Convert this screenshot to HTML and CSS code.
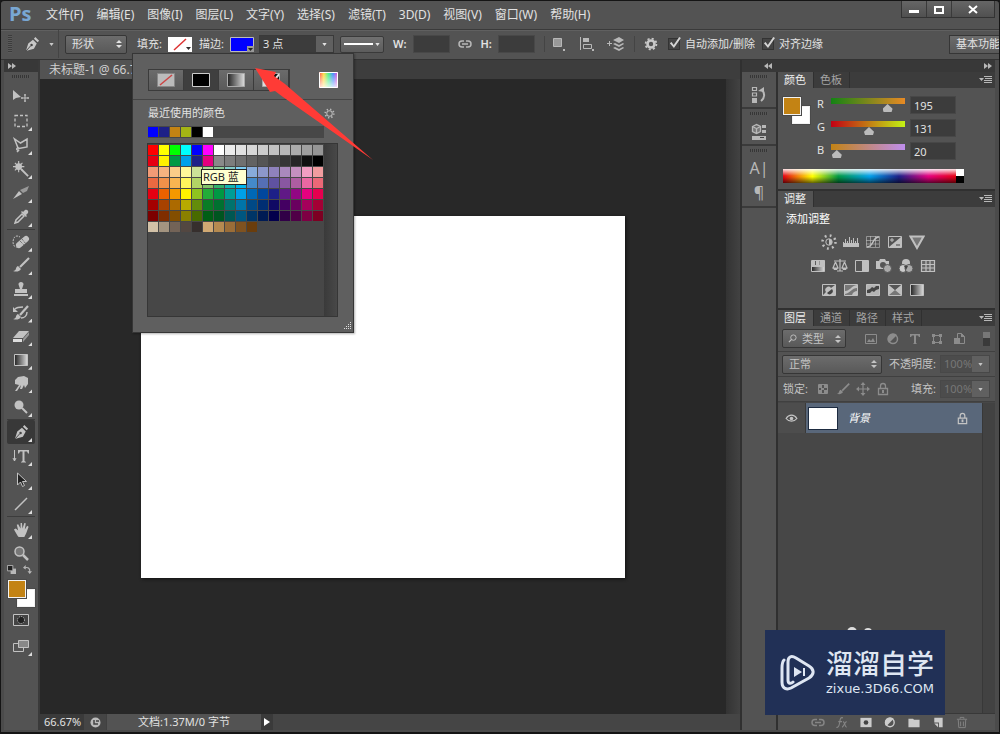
FILE: index.html
```html
<!DOCTYPE html>
<html lang="zh-CN">
<head>
<meta charset="utf-8">
<title>Ps</title>
<link rel="stylesheet" href="styles.css">
</head>
<body>
<svg class="sprite" aria-hidden="true">
  <defs>
    <linearGradient id="gr"><stop offset="0" stop-color="#222"/><stop offset="1" stop-color="#ddd"/></linearGradient>
    <linearGradient id="rainbow"><stop offset="0" stop-color="#f44"/><stop offset=".25" stop-color="#fd4"/><stop offset=".5" stop-color="#4e8"/><stop offset=".75" stop-color="#48f"/><stop offset="1" stop-color="#f4c"/></linearGradient>
    <linearGradient id="fade" x2="0" y2="1"><stop offset="0" stop-color="#fff" stop-opacity="0"/><stop offset="1" stop-color="#fff" stop-opacity=".8"/></linearGradient>
  </defs>
  <symbol id="i-pen" viewBox="0 0 18 18"><path fill="currentColor" d="M2 16l2.500-8 5-4 4 4-3 5.500zM10.500 3l1.500-2 4 4-1.500 1.500z"/><path d="M2 16l5-5.500" stroke="#444"/><circle cx="8" cy="9.500" r="1.300" fill="#444"/></symbol>
  <symbol id="i-updown" viewBox="0 0 6 10"><path fill="currentColor" d="M0 4l3-3 3 3zM0 6h6L3 9z"/></symbol>
  <symbol id="i-down" viewBox="0 0 6 4"><path fill="currentColor" d="M0 0h6L3 4z"/></symbol>
  <symbol id="i-link" viewBox="0 0 14 8"><path fill="none" stroke="currentColor" stroke-width="1.500" d="M6 1H4a3 3 0 0 0 0 6h2M8 1h2a3 3 0 0 1 0 6H8M4 4h6"/></symbol>
  <symbol id="i-combine" viewBox="0 0 16 16"><path fill="#999" stroke="currentColor" d="M2.500 2.500h8v8h-8z"/><path fill="currentColor" d="M12 13h2v2h-2z"/></symbol>
  <symbol id="i-align" viewBox="0 0 16 16"><path fill="none" stroke="currentColor" d="M1.500 1v13M4.500 8.500h8v4h-8z"/><path fill="currentColor" d="M4 2h6v4H4zM13 13h2v2h-2z"/></symbol>
  <symbol id="i-arrange" viewBox="0 0 18 16"><path fill="currentColor" d="M6 4l6-3 5 3-5 3zM6 8l2-1 4 2 4-2 1 1-5 3zM6 12l2-1 4 2 4-2 1 1-5 3zM0 7h2V5h1v2h2v1H3v2H2V8H0z"/></symbol>
  <symbol id="i-gear" viewBox="0 0 16 16"><circle cx="8" cy="8" r="4" fill="none" stroke="currentColor" stroke-width="3"/><circle cx="8" cy="8" r="6.200" fill="none" stroke="currentColor" stroke-width="2" stroke-dasharray="2.400 2.470"/></symbol>
  <symbol id="i-gear-thin" viewBox="0 0 16 16"><circle cx="8" cy="8" r="4" fill="none" stroke="currentColor" stroke-width="1.500"/><circle cx="8" cy="8" r="6.200" fill="none" stroke="currentColor" stroke-width="2.400" stroke-dasharray="2 2.870"/></symbol>
  <symbol id="i-move" viewBox="0 0 18 16"><path fill="currentColor" d="M1 1v10l3-2 5-1z"/><path fill="none" stroke="currentColor" d="M13 5v8M9 9h8M12 6h2M12 12h2M10 8v2M16 8v2"/></symbol>
  <symbol id="i-marquee" viewBox="0 0 16 16"><path fill="none" stroke="currentColor" stroke-width="1.300" stroke-dasharray="3 2" d="M2 2.500h12v11H2z"/></symbol>
  <symbol id="i-lasso" viewBox="0 0 16 16"><path fill="none" stroke="currentColor" stroke-width="1.500" d="M5 11L1.500 2l6 4L14 2v8l-8 1.500zM6 11c-3-1-3 3 0 2l-2 2"/></symbol>
  <symbol id="i-wand" viewBox="0 0 18 18"><circle cx="6" cy="6" r="3.500" fill="currentColor"/><path stroke="currentColor" stroke-width="1.200" d="M6 0v12M0 6h12M2 2l8 8M10 2l-8 8"/><path stroke="currentColor" stroke-width="2" d="M9 9l7 7"/></symbol>
  <symbol id="i-slice" viewBox="0 0 18 16"><path fill="currentColor" d="M1 14l6-8 3 3z"/><path fill="#999" d="M8 5l9-4-2 5-4 2z"/></symbol>
  <symbol id="i-dropper" viewBox="0 0 16 16"><path fill="none" stroke="currentColor" stroke-width="1.500" d="M2 14l1-3 6-6 2 2-6 6z"/><path fill="currentColor" d="M8 3l1-1 1 1 2-2c2-1 4 1 3 3l-2 2 1 1-1 1z"/></symbol>
  <symbol id="i-heal" viewBox="0 0 18 16"><path fill="none" stroke="currentColor" stroke-dasharray="2 1" d="M6 13c-5 1-6-5-4-9 2-3 4-2 6-1"/><path stroke="currentColor" stroke-width="6" stroke-linecap="round" d="M7 11l7-6"/><path stroke="#555" stroke-dasharray="1 1" d="M8 7l5 5M10 5l4 5"/></symbol>
  <symbol id="i-brush" viewBox="0 0 18 16"><path fill="currentColor" d="M1 14c4 0 2-4 5-5l3 3c-2 3-5 3-8 2z"/><path stroke="currentColor" stroke-width="2.200" d="M8 10l9-9"/></symbol>
  <symbol id="i-stamp" viewBox="0 0 16 16"><path fill="currentColor" d="M7 8L5.500 3.500C5 0 11 0 10.500 3.500L9 8h5v4H2V8zM1 13h14v2H1z"/></symbol>
  <symbol id="i-history" viewBox="0 0 18 16"><path fill="none" stroke="currentColor" stroke-width="1.500" d="M3 4c2-2 5-2 8-2M15 7c0 4-3 6-6 6"/><path fill="currentColor" d="M1 2v5h5zM1 14c4 0 2-4 5-5l3 3c-2 3-5 3-8 2z"/><path stroke="currentColor" stroke-width="2.200" d="M8 10l8-9"/></symbol>
  <symbol id="i-eraser" viewBox="0 0 18 16"><path fill="currentColor" d="M1 10l6-7h10l-6 7z"/><path fill="#ddd" d="M1 11h9v3H1z"/><path fill="#999" d="M11 11l6-7v3l-6 7z"/></symbol>
  <symbol id="i-grad" viewBox="0 0 16 16"><path fill="url(#gr)" stroke="currentColor" d="M1.500 2.500h13v11h-13z"/></symbol>
  <symbol id="i-smudge" viewBox="0 0 16 16"><path fill="currentColor" d="M2 15l4-6-4-1V4l3-3 6-1 4 2v6l-3 4-1-3-2 4-2 0 1-4-4 6z"/></symbol>
  <symbol id="i-dodge" viewBox="0 0 16 16"><circle cx="6" cy="6" r="4.500" fill="currentColor"/><path stroke="currentColor" stroke-width="2" d="M9 9l5 5"/></symbol>
  <symbol id="i-type" viewBox="0 0 18 16"><path fill="none" stroke="currentColor" d="M2.500 2v11M1 10l1.500 3L4 10"/><path fill="currentColor" d="M6 2h11v3.500h-1L15 3.500h-2.500V13l1.500 1v.5H9V14l1.500-1V3.500H8L7 5.500H6z"/></symbol>
  <symbol id="i-select" viewBox="0 0 16 16"><path fill="#222" stroke="currentColor" d="M4.500 1v12l3-3 2 4.500 2-1-2-4h4z"/></symbol>
  <symbol id="i-line" viewBox="0 0 16 16"><path stroke="currentColor" stroke-width="1.500" d="M2 14L14 2"/></symbol>
  <symbol id="i-hand" viewBox="0 0 18 18"><path fill="currentColor" d="M5 16L1 9l2-1 2.500 2L4 4l1.500-.5L8 8V2h1.500l.5 6 2-6 1.500.5L12.500 9 15 5l1.500 1-2.500 7-2 4H6z"/></symbol>
  <symbol id="i-zoom" viewBox="0 0 16 16"><circle cx="6.500" cy="6.500" r="4.500" fill="#777" stroke="currentColor" stroke-width="1.500"/><path stroke="currentColor" stroke-width="2.500" d="M10 10l5 5"/></symbol>
  <symbol id="i-default" viewBox="0 0 10 10"><path fill="currentColor" d="M4 4h6v6H4z"/><path fill="#222" stroke="currentColor" d="M.5.5h6v6h-6z"/></symbol>
  <symbol id="i-swap" viewBox="0 0 10 10"><path fill="none" stroke="currentColor" stroke-width="1.300" d="M2 3c4-1 6 1 5.500 5"/><path fill="currentColor" d="M3 0v5L0 3zM5 7h5l-2.500 3z"/></symbol>
  <symbol id="i-mask" viewBox="0 0 16 14"><path fill="#444" stroke="currentColor" d="M.5 1.500h15v11H.5z"/><circle cx="8" cy="7" r="3.500" fill="#222" stroke="currentColor" stroke-dasharray="1 1"/></symbol>
  <symbol id="i-screen" viewBox="0 0 16 14"><path fill="#555" stroke="currentColor" d="M.5 4.500h10v8H.5z"/><path fill="#888" stroke="currentColor" d="M5.500 1.500h10v7h-10z"/></symbol>
  <symbol id="i-hist" viewBox="0 0 16 18"><path fill="none" stroke="currentColor" stroke-width="1.200" d="M1.500 1.500h4v3h-4zM1.500 7h4v3h-4z"/><path fill="currentColor" d="M1 12h5v5H1z"/><path fill="none" stroke="currentColor" stroke-width="2" d="M10 15c4-3 4-8 1-11"/><path fill="currentColor" d="M7 5l6-4v5z"/></symbol>
  <symbol id="i-props" viewBox="0 0 16 18"><path fill="#777" stroke="currentColor" stroke-width="1.300" d="M1.500 3.500l4-2 4 2v5l-4 2-4-2zM1.500 3.500l4 2 4-2M5.500 5.500v5"/><path fill="currentColor" d="M11 2h4v3h-4zM11 7h4v3h-4zM1 13h14v4H1z"/><path fill="#444" d="M9 14h4v1H9z"/></symbol>
  <symbol id="i-menu" viewBox="0 0 13 8"><path fill="currentColor" d="M0 2h5L2.500 5zM5 0h8v1H5zM6 2h7v1H6zM5 4h8v1H5zM5 6h8v1H5z"/></symbol>
  <symbol id="i-sun" viewBox="0 0 16 16"><circle cx="8" cy="8" r="3.200" fill="none" stroke="currentColor"/><path fill="currentColor" d="M8 5a3 3 0 0 1 0 6z"/><circle cx="8" cy="8" r="6.500" fill="none" stroke="currentColor" stroke-width="2.500" stroke-dasharray="1.800 3.300"/></symbol>
  <symbol id="i-levels" viewBox="0 0 16 16"><path stroke="currentColor" d="M0 12.500h16M.5 12V8M2.500 12V5M4.500 12V7M6.500 12V3M8.500 12V6M10.500 12V4M12.500 12V7M14.500 12V4"/><path fill="currentColor" d="M0 9h16v4H0z"/></symbol>
  <symbol id="i-curves" viewBox="0 0 16 16"><path fill="none" stroke="currentColor" stroke-opacity=".6" d="M1.500 2.500h13v11h-13zM5.500 2v11M10.500 2v11M1 6.500h13M1 10h13"/><path fill="none" stroke="currentColor" stroke-width="1.500" d="M2 13c7 0 5-10 12-10"/></symbol>
  <symbol id="i-expo" viewBox="0 0 16 16"><path fill="none" stroke="currentColor" d="M1.500 2.500h13v11h-13z"/><path fill="currentColor" d="M14 3v10H2z"/><path stroke="currentColor" d="M3 6h4M5 4v4"/><path stroke="#444" d="M9 11h4"/></symbol>
  <symbol id="i-vib" viewBox="0 0 16 16"><path fill="#777" stroke="currentColor" stroke-width="2" d="M1.500 2.500h13L8 14z"/></symbol>
  <symbol id="i-hue" viewBox="0 0 16 16"><path fill="url(#gr)" stroke="currentColor" d="M1.500 2.500h13v11h-13z"/><path fill="currentColor" d="M2 3h3v4H2zM6 3h3v4H6zM10 3h4v4h-4zM2 7h12v2H2z"/></symbol>
  <symbol id="i-balance" viewBox="0 0 16 16"><path fill="none" stroke="currentColor" stroke-width="1.200" d="M2 3h12M8 1v12M5 13h6M3.500 4L1 10h5L3.500 4M12.500 4L10 10h5l-2.500-6"/><path fill="currentColor" d="M1 10h5l-1 2H2zM10 10h5l-1 2h-3z"/></symbol>
  <symbol id="i-bw" viewBox="0 0 16 16"><path fill="#555" stroke="currentColor" d="M1.500 2.500h13v11h-13z"/><path fill="currentColor" d="M8 3h6v10H8z"/></symbol>
  <symbol id="i-photo" viewBox="0 0 16 16"><path fill="currentColor" d="M0 3h3l1-2h5l1 2h3v8H0z"/><circle cx="7" cy="7" r="3" fill="#555"/><circle cx="11.500" cy="10.500" r="4" fill="#aaa" stroke="#555"/></symbol>
  <symbol id="i-mixer" viewBox="0 0 16 16"><circle cx="8" cy="5" r="4" fill="currentColor"/><circle cx="5" cy="10.500" r="4" fill="#ccc" stroke="#555"/><circle cx="11" cy="10.500" r="4" fill="#aaa" stroke="#555"/><path fill="#444" d="M6 8h4l-2 4z"/></symbol>
  <symbol id="i-lookup" viewBox="0 0 16 16"><path fill="#666" stroke="currentColor" stroke-width="1.200" d="M1.500 2.500h13v11h-13zM6 2v11M10 2v11M1 6.500h13M1 10h13"/></symbol>
  <symbol id="i-invert" viewBox="0 0 16 16"><path fill="#555" stroke="currentColor" d="M1.500 2.500h13v11h-13z"/><path fill="currentColor" d="M14 3v10H2l3-3a3 3 0 0 1 5-4z"/><path fill="#444" d="M6 11a3 3 0 0 0 5-4z"/></symbol>
  <symbol id="i-poster" viewBox="0 0 16 16"><path fill="#777" stroke="currentColor" d="M1.500 2.500h13v11h-13z"/><path fill="currentColor" d="M2 9c5 0 6-5 12-6v3c-5 0-7 5-12 6zM9 13c1-3 3-4 5-4v4z"/></symbol>
  <symbol id="i-thresh" viewBox="0 0 16 16"><path fill="#b4b4b4" stroke="currentColor" d="M1.500 2.500h13v11h-13z"/><path fill="#444" d="M2 8l3-1 2-2 2 1 2-2h3v3l-3 1-2 2-2-1-2 2H2z"/></symbol>
  <symbol id="i-selcol" viewBox="0 0 16 16"><path fill="#777" stroke="currentColor" d="M1.500 2.500h13v11h-13z"/><path fill="currentColor" d="M2 3l6 5-6 5zM14 3L8 8l6 5z"/><path fill="#555" d="M2 3h12L8 8z"/></symbol>
  <symbol id="i-image" viewBox="0 0 14 14"><path fill="none" stroke="currentColor" d="M1.500 2.500h11v9h-11z"/><path fill="currentColor" d="M3 10l2-3 2 2 2-3 2 4z"/></symbol>
  <symbol id="i-adjust" viewBox="0 0 14 14"><circle cx="7" cy="7" r="4.500" fill="none" stroke="currentColor" stroke-width="1.500"/><path fill="currentColor" d="M3 11A5 5 0 0 1 11 3z"/></symbol>
  <symbol id="i-t" viewBox="0 0 14 14"><path fill="currentColor" d="M2 2h10v3h-1l-1-1.500H8V11l1 1H5l1-1V3.500H4L3 5H2z"/></symbol>
  <symbol id="i-shape" viewBox="0 0 14 14"><path fill="none" stroke="currentColor" d="M3.500 3.500h7v7h-7z"/><path fill="currentColor" d="M2 2h3v3H2zM9 2h3v3H9zM2 9h3v3H2zM9 9h3v3H9z"/></symbol>
  <symbol id="i-smart" viewBox="0 0 14 14"><path fill="none" stroke="currentColor" d="M5.500 1.500h4l3 3v7h-7z"/><path fill="currentColor" d="M2 6h6v6H2zM9 1l4 4H9z"/></symbol>
  <symbol id="i-check" viewBox="0 0 14 14"><path fill="none" stroke="currentColor" d="M2.500 2.500h9v9h-9z"/><path fill="currentColor" d="M3 3h3v3H3zM8 3h3v3H8zM5 6h3v2H5zM3 8h3v3H3zM8 8h3v3H8z"/></symbol>
  <symbol id="i-cross" viewBox="0 0 14 14"><path fill="none" stroke="currentColor" stroke-width="1.200" d="M7 2v10M2 7h10"/><path fill="currentColor" d="M7 0l2.500 3h-5zM7 14l2.500-3h-5zM0 7l3-2.500v5zM14 7l-3-2.500v5z"/></symbol>
  <symbol id="i-lock" viewBox="0 0 14 14"><path fill="none" stroke="currentColor" stroke-width="1.300" d="M4.500 6V4a2.500 2.500 0 0 1 5 0v2M2.500 6.500h9v6h-9z"/><path fill="currentColor" d="M6 8h2v3H6z"/></symbol>
  <symbol id="i-eye" viewBox="0 0 14 10"><path fill="none" stroke="currentColor" stroke-width="1.300" d="M1 5c3-5 9-5 12 0-3 4-9 4-12 0z"/><circle cx="7" cy="5" r="2" fill="currentColor"/></symbol>
  <symbol id="i-fx" viewBox="0 0 14 14"><path fill="none" stroke="currentColor" stroke-width="1.200" d="M8 2C5 1 5 4 4.500 7S3 13 1 12M3 6h4M8 6c2 0 2 6 4 6M12 6c-2 0-3 6-5 6"/></symbol>
  <symbol id="i-addmask" viewBox="0 0 14 14"><path fill="currentColor" d="M1 2h12v10H1z"/><circle cx="7" cy="7" r="2.500" fill="#444"/></symbol>
  <symbol id="i-folder" viewBox="0 0 14 14"><path fill="currentColor" d="M1 3h5l1 1h6v8H1z"/></symbol>
  <symbol id="i-new" viewBox="0 0 14 14"><path fill="currentColor" d="M3 2h9v10H8V7H3z"/><path fill="currentColor" d="M3 8h4v4z"/></symbol>
  <symbol id="i-trash" viewBox="0 0 14 14"><path fill="none" stroke="currentColor" d="M1.500 3.500h11M5 3V1.500h4V3M3 4l.5 8.500h7L11 4M5.500 6v5M8.500 6v5"/></symbol>
  <symbol id="i-search" viewBox="0 0 10 10"><circle cx="6" cy="4" r="3" fill="none" stroke="currentColor"/><path stroke="currentColor" stroke-width="1.300" d="M4 6L1 9"/></symbol>
  <symbol id="i-ff" viewBox="0 0 8 6"><path fill="currentColor" d="M0 0l4 3-4 3zM4 0l4 3-4 3z"/></symbol>
  <symbol id="i-rew" viewBox="0 0 8 6"><path fill="currentColor" d="M4 0L0 3l4 3zM8 0L4 3l4 3z"/></symbol>
</svg>

<div class="app">
  <header class="menubar">
    <div class="logo">Ps</div>
    <nav class="menus">
      <button>文件(F)</button><button>编辑(E)</button><button>图像(I)</button><button>图层(L)</button><button>文字(Y)</button><button>选择(S)</button><button>滤镜(T)</button><button>3D(D)</button><button>视图(V)</button><button>窗口(W)</button><button>帮助(H)</button>
    </nav>
    <div class="window-buttons">
      <button aria-label="最小化"><svg width="10" height="9" viewBox="0 0 10 9"><path fill="#fff" d="M0 5h10v3H0z"/></svg></button>
      <button aria-label="最大化"><svg width="10" height="9" viewBox="0 0 10 9"><path fill="none" stroke="#fff" stroke-width="2" d="M1 2h8v6H1z"/></svg></button>
      <button class="close" aria-label="关闭"><svg width="10" height="9" viewBox="0 0 10 9"><path stroke="#fff" stroke-width="2" d="M1 1l8 7M9 1L1 8"/></svg></button>
    </div>
  </header>

  <section class="options">
    <span class="grip-v"></span>
    <button class="tool-preset" aria-label="钢笔工具"><svg width="17" height="17"><use href="#i-pen"/></svg><svg width="5" height="3" viewBox="0 0 6 4"><use href="#i-down"/></svg></button>
    <span class="select mode"><select aria-label="模式"><option>形状</option></select><svg width="6" height="10"><use href="#i-updown"/></svg></span>
    <span class="opt-label fill-label">填充:</span>
    <button class="chip" aria-label="填充"><svg width="24" height="15" viewBox="0 0 24 15"><path fill="#fff" d="M0 0h24v15H0z"/><path stroke="#d33" stroke-width="1.500" d="M6 13L18 2"/><path fill="#333" d="M18 10h5l-2.500 3z"/></svg></button>
    <span class="opt-label stroke-label">描边:</span>
    <button class="chip" aria-label="描边"><svg width="24" height="15" viewBox="0 0 24 15"><path fill="#00f" stroke="#bbb" d="M.5.5h23v14H.5z"/><path fill="#999" d="M17 9h7v6h-7z"/><path fill="#222" d="M18 11h5l-2.500 3z"/></svg></button>
    <span class="combo size"><input aria-label="描边宽度" value="3 点"><button aria-label="宽度列表"><svg width="5" height="3" viewBox="0 0 6 4"><use href="#i-down"/></svg></button></span>
    <button class="line-style" aria-label="描边类型"><span></span><svg width="5" height="3" viewBox="0 0 6 4"><use href="#i-down"/></svg></button>
    <label class="wh">W:<input></label>
    <button class="icon link" aria-label="链接"><svg width="14" height="8"><use href="#i-link"/></svg></button>
    <label class="wh">H:<input></label>
    <div class="path-ops">
      <button class="icon" aria-label="路径操作"><svg width="16" height="16"><use href="#i-combine"/></svg></button>
      <button class="icon" aria-label="路径对齐"><svg width="16" height="16"><use href="#i-align"/></svg></button>
      <button class="icon" aria-label="路径排列"><svg width="18" height="16"><use href="#i-arrange"/></svg></button>
    </div>
    <button class="icon gear" aria-label="设置"><svg width="14" height="14"><use href="#i-gear"/></svg></button>
    <label class="check"><input type="checkbox" checked>自动添加/删除</label>
    <label class="check"><input type="checkbox" checked>对齐边缘</label>
    <button class="workspace-name">基本功能</button>

    <div class="popup">
      <div class="popup-types">
        <div class="type-buttons">
          <button aria-label="无颜色"><svg width="18" height="14" viewBox="0 0 18 14"><path fill="#bbb" stroke="#888" d="M.5.5h17v13H.5z"/><path stroke="#c44" stroke-width="1.500" d="M3 12L15 2"/></svg></button>
          <button class="on" aria-label="纯色"><svg width="18" height="14" viewBox="0 0 18 14"><path stroke="#ccc" d="M.5.5h17v13H.5z"/></svg></button>
          <button aria-label="渐变"><svg width="18" height="14" viewBox="0 0 18 14"><path fill="url(#gr)" stroke="#aaa" d="M.5.5h17v13H.5z"/></svg></button>
          <button aria-label="图案"><svg width="18" height="14" viewBox="0 0 18 14"><path fill="#ddd" stroke="#aaa" d="M.5.5h17v13H.5z"/><path fill="#111" d="M9 5l4-4h3l-6 7zM13 8l4-5v6l-3 3z"/></svg></button>
        </div>
        <button class="picker" aria-label="拾色器"><svg width="19" height="16" viewBox="0 0 19 16"><path fill="url(#rainbow)" d="M0 0h19v16H0z"/><path fill="url(#fade)" stroke="#fff" d="M.5.5h18v15H.5z"/></svg></button>
      </div>
      <div class="popup-head"><span>最近使用的颜色</span><button class="icon" aria-label="选项"><svg width="11" height="11"><use href="#i-gear-thin"/></svg></button></div>
      <div class="recent swatches" id="recent"></div>
      <div class="swatch-box"><div class="swatches" id="swatches"></div><div class="swatch-scroll"></div></div>
      <svg class="resize" width="9" height="9" viewBox="0 0 9 9"><path fill="#ddd" d="M7 0h1v1H7zM5 2h1v1H5zM7 2h1v1H7zM3 4h1v1H3zM5 4h1v1H5zM7 4h1v1H7zM1 6h1v1H1zM3 6h1v1H3zM5 6h1v1H5zM7 6h1v1H7z"/></svg>
      <div class="tooltip">RGB 蓝</div>
      <svg class="arrow" width="122" height="96" viewBox="0 0 122 96"><path fill="#ff3b36" d="M3 3L24 7l-2 4 11 8 88 76L31 32l-8-6-5 1z"/></svg>
    </div>
  </section>

  <main class="work">
    <aside class="toolbar">
      <div class="strip"><svg width="8" height="6"><use href="#i-ff"/></svg></div>
      <div class="grip"></div>
      <div class="tools">
        <button class="tool" aria-label="移动"><svg width="18" height="16"><use href="#i-move"/></svg></button>
        <button class="tool more" aria-label="选框"><svg width="16" height="16"><use href="#i-marquee"/></svg></button>
        <button class="tool more" aria-label="套索"><svg width="16" height="16"><use href="#i-lasso"/></svg></button>
        <button class="tool more" aria-label="魔棒"><svg width="17" height="17"><use href="#i-wand"/></svg></button>
        <button class="tool more" aria-label="切片"><svg width="18" height="16"><use href="#i-slice"/></svg></button>
        <button class="tool more" aria-label="吸管"><svg width="16" height="16"><use href="#i-dropper"/></svg></button>
      </div>
      <div class="tools second">
        <button class="tool more" aria-label="修复"><svg width="18" height="16"><use href="#i-heal"/></svg></button>
        <button class="tool more" aria-label="画笔"><svg width="18" height="16"><use href="#i-brush"/></svg></button>
        <button class="tool more" aria-label="图章"><svg width="16" height="16"><use href="#i-stamp"/></svg></button>
        <button class="tool more" aria-label="历史画笔"><svg width="18" height="16"><use href="#i-history"/></svg></button>
        <button class="tool more" aria-label="橡皮擦"><svg width="18" height="16"><use href="#i-eraser"/></svg></button>
        <button class="tool more" aria-label="渐变"><svg width="16" height="16"><use href="#i-grad"/></svg></button>
        <button class="tool more" aria-label="涂抹"><svg width="16" height="16"><use href="#i-smudge"/></svg></button>
        <button class="tool more" aria-label="减淡"><svg width="16" height="16"><use href="#i-dodge"/></svg></button>
      </div>
      <div class="tools">
        <button class="tool more active" aria-label="钢笔"><svg width="17" height="17"><use href="#i-pen"/></svg></button>
        <button class="tool more" aria-label="直排文字"><svg width="18" height="16"><use href="#i-type"/></svg></button>
        <button class="tool more" aria-label="路径选择"><svg width="16" height="16"><use href="#i-select"/></svg></button>
        <button class="tool more" aria-label="直线"><svg width="16" height="16"><use href="#i-line"/></svg></button>
      </div>
      <div class="tools view-tools">
        <button class="tool more" aria-label="抓手"><svg width="17" height="17"><use href="#i-hand"/></svg></button>
        <button class="tool" aria-label="缩放"><svg width="16" height="16"><use href="#i-zoom"/></svg></button>
      </div>
      <div class="mini"><button class="icon" aria-label="默认颜色"><svg width="9" height="9"><use href="#i-default"/></svg></button><button class="icon" aria-label="切换颜色"><svg width="9" height="9"><use href="#i-swap"/></svg></button></div>
      <div class="fgbg"><button class="bg" aria-label="背景色"></button><button class="fg" aria-label="前景色"></button></div>
      <div class="modes">
        <button class="tool" aria-label="快速蒙版"><svg width="16" height="14"><use href="#i-mask"/></svg></button>
        <button class="tool more" aria-label="屏幕模式"><svg width="16" height="14"><use href="#i-screen"/></svg></button>
      </div>
    </aside>

    <section class="document">
      <div class="doc-tabs"><div class="doc-tab">未标题-1 @ 66.7%</div></div>
      <div class="doc-view"><div class="canvas-area"><div class="page"></div></div><div class="v-scroll"></div></div>
      <footer class="status">
        <span class="zoom">66.67%</span>
        <span class="share"><svg width="11" height="11" viewBox="0 0 11 11"><circle cx="5.500" cy="5.500" r="5" fill="#bbb"/><path fill="none" stroke="#444" stroke-width="1.500" d="M4 3v4h4M6 4h3"/></svg></span>
        <span class="info">文档:1.37M/0 字节</span>
        <button aria-label="状态菜单"><svg width="6" height="8" viewBox="0 0 6 8"><path fill="#fff" d="M0 0l6 4-6 4z"/></svg></button>
      </footer>
    </section>

    <aside class="right">
      <div class="strip right-strip"><svg width="8" height="6"><use href="#i-rew"/></svg><svg width="8" height="6"><use href="#i-ff"/></svg></div>
      <div class="right-body">
        <div class="dock">
          <div class="dock-group"><div class="grip"></div><button class="icon" aria-label="历史记录"><svg width="16" height="18"><use href="#i-hist"/></svg></button></div>
          <div class="dock-group"><div class="grip"></div><button class="icon" aria-label="属性"><svg width="16" height="18"><use href="#i-props"/></svg></button></div>
          <div class="dock-group last"><div class="grip"></div><button class="icon glyph">A|</button><button class="icon glyph">¶</button></div>
        </div>
        <div class="panels">
          <section class="panel color-panel">
            <div class="tabs"><button class="tab on">颜色</button><button class="tab">色板</button><button class="icon panel-menu" aria-label="面板菜单"><svg width="13" height="8"><use href="#i-menu"/></svg></button></div>
            <div class="color-body">
              <div class="fgbg"><button class="bg" aria-label="背景色"></button><button class="fg" aria-label="前景色"></button></div>
              <div class="sliders">
                <div class="slider"><label for="r">R</label><input id="r" class="r" type="range" max="255" value="195"><input aria-label="R 值" value="195"></div>
                <div class="slider"><label for="g">G</label><input id="g" class="g" type="range" max="255" value="131"><input aria-label="G 值" value="131"></div>
                <div class="slider"><label for="b">B</label><input id="b" class="b" type="range" max="255" value="20"><input aria-label="B 值" value="20"></div>
              </div>
            </div>
            <div class="spectrum"><div class="hues"></div><div class="bw"></div></div>
          </section>
          <section class="panel adjust-panel">
            <div class="tabs"><button class="tab on">调整</button><button class="icon panel-menu" aria-label="面板菜单"><svg width="13" height="8"><use href="#i-menu"/></svg></button></div>
            <div class="adjust-title">添加调整</div>
            <div class="adjust-rows">
              <div class="adjust-row"><svg><use href="#i-sun"/></svg><svg><use href="#i-levels"/></svg><svg><use href="#i-curves"/></svg><svg><use href="#i-expo"/></svg><svg><use href="#i-vib"/></svg></div>
              <div class="adjust-row"><svg><use href="#i-hue"/></svg><svg><use href="#i-balance"/></svg><svg><use href="#i-bw"/></svg><svg><use href="#i-photo"/></svg><svg><use href="#i-mixer"/></svg><svg><use href="#i-lookup"/></svg></div>
              <div class="adjust-row"><svg><use href="#i-invert"/></svg><svg><use href="#i-poster"/></svg><svg><use href="#i-thresh"/></svg><svg><use href="#i-selcol"/></svg><svg><use href="#i-grad"/></svg></div>
            </div>
          </section>
          <section class="panel layers-panel">
            <div class="tabs"><button class="tab on">图层</button><button class="tab">通道</button><button class="tab">路径</button><button class="tab">样式</button><button class="icon panel-menu" aria-label="面板菜单"><svg width="13" height="8"><use href="#i-menu"/></svg></button></div>
            <div class="layer-row filter">
              <span class="select kind"><svg class="search" width="9" height="9"><use href="#i-search"/></svg><select aria-label="类型"><option>类型</option></select><svg width="6" height="10"><use href="#i-updown"/></svg></span>
              <div class="filter-icons"><svg><use href="#i-image"/></svg><svg><use href="#i-adjust"/></svg><svg><use href="#i-t"/></svg><svg><use href="#i-shape"/></svg><svg><use href="#i-smart"/></svg></div>
              <span class="toggle"></span>
            </div>
            <div class="layer-row">
              <span class="select blend"><select aria-label="混合模式"><option>正常</option></select><svg width="6" height="10"><use href="#i-updown"/></svg></span>
              <label for="opacity" class="row-label">不透明度:</label>
              <span class="combo pct"><input id="opacity" value="100%" disabled><button aria-label="不透明度列表"><svg width="5" height="3" viewBox="0 0 6 4"><use href="#i-down"/></svg></button></span>
            </div>
            <div class="layer-row">
              <span class="lock-label">锁定:</span>
              <div class="lock-icons"><svg><use href="#i-check"/></svg><svg><use href="#i-brush"/></svg><svg><use href="#i-cross"/></svg><svg><use href="#i-lock"/></svg></div>
              <label for="fill" class="row-label">填充:</label>
              <span class="combo pct"><input id="fill" value="100%" disabled><button aria-label="填充列表"><svg width="5" height="3" viewBox="0 0 6 4"><use href="#i-down"/></svg></button></span>
            </div>
            <div class="layer-list">
              <div class="layers">
                <div class="layer"><span class="eye"><svg width="13" height="9"><use href="#i-eye"/></svg></span><span class="thumb"></span><span class="layer-name">背景</span><svg width="13" height="13"><use href="#i-lock"/></svg></div>
              </div>
              <div class="layer-scroll"></div>
            </div>
            <div class="layer-foot"><svg class="dim"><use href="#i-link"/></svg><svg class="dim"><use href="#i-fx"/></svg><svg><use href="#i-addmask"/></svg><svg><use href="#i-adjust"/></svg><svg><use href="#i-folder"/></svg><svg><use href="#i-new"/></svg><svg class="dim"><use href="#i-trash"/></svg></div>
          </section>
        </div>
      </div>
    </aside>
  </main>

  <svg class="dots" width="28" height="4" viewBox="0 0 28 4"><circle cx="6" cy="5" r="5" fill="#ddd"/><circle cx="22" cy="5" r="4" fill="#ddd"/></svg>
  <div class="watermark">
    <svg width="35" height="37" viewBox="0 0 35 37"><path fill="none" stroke="#dfe6f2" stroke-width="3" stroke-linecap="round" stroke-linejoin="round" d="M4 6c-2 2-2 4-2 8v14c0 7 5 8 9 6l18-10c6-4 5-9 0-12L16 4c-5-3-8-1-8 4v18c0 4 3 4 5 2"/><path fill="#dfe6f2" d="M14 13l8 5-8 5zM23 14h2v8h-2z"/></svg>
    <div class="brand"><strong>溜溜自学</strong><span>zixue.3D66.COM</span></div>
  </div>
</div>
<script src="script.js"></script>
</body>
</html>
```
FILE: styles.css
```css
* { box-sizing: border-box; }

body {
  margin: 0;
  background: #1a1a1a;
  color: #e2e2e2;
  font: 11px/16px "Noto Sans", "Noto Sans CJK SC", sans-serif;
}

button, input, select {
  margin: 0;
  padding: 0;
  border: 0;
  background: none;
  color: inherit;
  font: inherit;
  min-width: 0;
}

svg { display: block; flex: none; }
.sprite { position: absolute; width: 0; height: 0; }
.icon { display: flex; align-items: center; justify-content: center; color: #b8b8b8; }

.app {
  position: relative;
  display: flex;
  flex-direction: column;
  height: 100vh;
  overflow: hidden;
  border: 1px solid #151515;
  border-bottom-width: 2px;
  border-radius: 4px 4px 0 0;
  background: #535353;
}

/* Menu bar */
.menubar {
  display: flex;
  height: 28px;
  padding: 0 4px 0 8px;
  font-size: 12px;
}
.logo { width: 37px; color: #79a7d3; font: bold 20px/25px "Open Sans", sans-serif; }
.menus { display: flex; flex: 1; gap: 13px; align-items: center; white-space: nowrap; }
.window-buttons { display: flex; height: 17px; border: 1px solid #333; border-top: 0; }
.window-buttons button {
  display: flex;
  align-items: center;
  justify-content: center;
  width: 25px;
  background: linear-gradient(#666, #505050);
  border-right: 1px solid #3a3a3a;
}
.window-buttons .close { width: 42px; border: 0; }

/* Options bar */
.options {
  position: relative;
  z-index: 2;
  display: flex;
  align-items: center;
  height: 31px;
  padding: 0 0 1px 7px;
  border-top: 1px solid #3a3a3a;
  border-bottom: 1px solid #333;
  box-shadow: inset 0 1px #606060;
  white-space: nowrap;
}
.grip-v { width: 4px; height: 18px; background: repeating-linear-gradient(#3c3c3c 0 1px, #5a5a5a 1px 2px); }
.tool-preset {
  display: flex;
  gap: 8px;
  align-items: center;
  height: 28px;
  width: 47px;
  padding-left: 12px;
  color: #c8c8c8;
  border-right: 1px solid #444;
}
.select {
  position: relative;
  display: flex;
  align-items: center;
  height: 19px;
  border: 1px solid #363636;
  border-radius: 2px;
  background: linear-gradient(#6c6c6c, #595959);
}
.select select { flex: 1; appearance: none; padding-left: 6px; line-height: 16px; }
.select svg { margin-right: 4px; }
.mode { width: 62px; margin-left: 6px; }
.fill-label { width: 31px; margin-left: 10px; }
.stroke-label { width: 31px; margin-left: 7px; }
.chip { height: 15px; }
.combo { display: flex; height: 18px; border: 1px solid #3a3a3a; }
.combo input { flex: 1; width: 0; padding-left: 3px; background: #3c3c3c; }
.combo button {
  display: flex;
  align-items: center;
  justify-content: center;
  width: 17px;
  background: #606060;
}
.size { width: 75px; margin-left: 5px; }
.line-style {
  display: flex;
  align-items: center;
  gap: 2px;
  width: 44px;
  height: 17px;
  margin-left: 6px;
  padding: 0 3px;
  border: 1px solid #3a3a3a;
  border-radius: 2px;
  background: linear-gradient(#707070, #5c5c5c);
}
.line-style span { flex: 1; height: 2px; background: #fff; }
.wh { display: flex; align-items: center; gap: 6px; margin-left: 9px; font-weight: 600; }
.wh input { width: 37px; height: 18px; background: #3c3c3c; border: 1px solid #484848; }
.link { margin-left: 8px; }
.path-ops { display: flex; gap: 12px; margin-left: 9px; padding: 0 9px 0 6px; border: solid #444; border-width: 0 1px; }
.gear { width: 20px; margin-left: 6px; color: #c8c8c8; }
.check { display: flex; align-items: center; gap: 5px; margin-left: 7px; }
.check input {
  position: relative;
  appearance: none;
  width: 12px;
  height: 12px;
  background: #444;
  border: 1px solid #333;
}
.check input::after {
  content: "";
  position: absolute;
  inset: -2px -2px 0 0;
  background: #d4d4d4;
  clip-path: polygon(8% 52%, 22% 42%, 40% 66%, 86% 0, 100% 8%, 42% 92%);
}
.workspace-name {
  margin-left: auto;
  width: 50px;
  height: 19px;
  padding-left: 6px;
  overflow: hidden;
  text-align: left;
  border: 1px solid #363636;
  border-right: 0;
  background: linear-gradient(#6c6c6c, #595959);
}

/* Stroke colour popup */
.popup {
  position: absolute;
  left: 131px;
  top: 23px;
  width: 222px;
  padding: 15px 15px 15px 14px;
  border: 1px solid #363636;
  background: #5f5f5f;
  box-shadow: 1px 1px 2px rgba(0, 0, 0, .3);
}
.popup-types {
  display: flex;
  justify-content: space-between;
  align-items: center;
  margin: 0 -14px;
  padding: 0 14px 8px 15px;
  border-bottom: 1px solid #444;
}
.type-buttons { display: flex; border: 1px solid #3b3b3b; }
.type-buttons button {
  display: flex;
  align-items: center;
  justify-content: center;
  width: 35px;
  height: 20px;
  background: linear-gradient(#6b6b6b, #5a5a5a);
  border-right: 1px solid #3b3b3b;
}
.type-buttons .on { background: #3f3f3f; }
.popup-head { display: flex; justify-content: space-between; align-items: center; height: 26px; padding: 0 3px 0 1px; }
.swatches { display: grid; grid-template-columns: repeat(16, 10px); grid-auto-rows: 10px; gap: 1px; }
.recent { width: 176px; margin-left: 1px; padding: 1px 0; background: #474747; }
.swatch-box {
  display: flex;
  justify-content: space-between;
  height: 174px;
  margin-top: 5px;
  padding-left: 0;
  border: 1px solid #363636;
  background: #474747;
}
.swatch-box .swatches { align-content: start; padding-top: 1px; }
.swatch-scroll { width: 13px; background: linear-gradient(90deg, #3a3a3a, #484848); }
.resize { position: absolute; right: 1px; bottom: 1px; }
.tooltip {
  position: absolute;
  left: 68px;
  top: 115px;
  width: 46px;
  height: 16px;
  padding-left: 1px;
  color: #222;
  background: #ffffcf;
  border: 1px solid #222;
  line-height: 14px;
}
.arrow { position: absolute; left: 119px; top: 11px; }

/* Work area */
.work { display: flex; flex: 1; min-height: 0; padding: 0 4px 2px 3px; background: #4b4b4b; }
.strip { display: flex; align-items: center; height: 12px; padding: 0 4px; background: #383838; color: #b8b8b8; }
.grip { width: 18px; height: 3px; background: repeating-linear-gradient(90deg, #363636 0 1px, #555 1px 2px); }

.toolbar { width: 36px; background: #535353; border-right: 2px solid #3a3a3a; }
.toolbar .grip { margin: 3px 0 7px 8px; }
.tools { margin: 0 3px; border-bottom: 1px solid #3c3c3c; }
.view-tools { border: 0; }
.tool {
  position: relative;
  display: flex;
  align-items: center;
  justify-content: center;
  width: 28px;
  height: 24px;
  color: #c2c2c2;
}
.second { display: flex; flex-direction: column; height: 190px; }
.second .tool { flex: 1; }
.more::after {
  content: "";
  position: absolute;
  right: 3px;
  bottom: 2px;
  width: 4px;
  height: 4px;
  background: #ddd;
  clip-path: polygon(100% 0, 100% 100%, 0 100%);
}
.active { background: #383838; border-radius: 2px; }
.mini { display: flex; gap: 7px; padding: 0 0 6px 3px; }
.fgbg { position: relative; width: 27px; height: 27px; }
.fgbg button { position: absolute; width: 18px; height: 18px; border: 1px solid #f2f2f2; outline: 1px solid #4a4a4a; }
.fg { left: 0; top: 0; background: #c38314; }
.bg { right: 0; bottom: 0; background: #fff; }
.toolbar .fgbg { margin-left: 4px; }
.modes { display: grid; gap: 2px; margin: 1px 3px; }

.document { display: flex; flex: 1; flex-direction: column; min-width: 0; }
.doc-tabs { height: 19px; background: #3d3d3d; }
.doc-tab { width: 160px; height: 19px; padding-left: 9px; background: #535353; font-size: 12px; line-height: 20px; color: #d0d0d0; }
.doc-view { display: flex; flex: 1; min-height: 0; }
.canvas-area { display: flex; flex: 1; align-items: center; justify-content: center; background: #282828; }
.page { width: 484px; height: 362px; background: #fff; box-shadow: 1px 1px 3px #111; }
.v-scroll { width: 14px; background: linear-gradient(90deg, #333, #424242); }
.status { display: flex; align-items: center; height: 16px; background: #454545; }
.zoom { width: 44px; padding-left: 4px; background: #3a3a3a; }
.share { display: flex; justify-content: center; width: 22px; }
.info { width: 155px; text-align: center; background: #535353; border-left: 1px solid #404040; }
.status button { display: flex; align-items: center; justify-content: center; width: 12px; height: 16px; background: #3a3a3a; }

.right { display: flex; flex-direction: column; width: 255px; border-left: 2px solid #303030; }
.right-strip { justify-content: space-between; padding: 0 3px 0 22px; }
.right-body { display: flex; flex: 1; min-height: 0; }
.dock { width: 34px; background: #535353; }
.dock-group { display: flex; flex-direction: column; align-items: center; gap: 8px; padding: 3px 0 0; height: 37px; border-bottom: 2px solid #3a3a3a; }
.dock-group.last { height: auto; gap: 7px; padding-bottom: 6px; }
.glyph { height: 17px; font-size: 16px; }

.panels { display: flex; flex: 1; flex-direction: column; min-width: 0; border-left: 2px solid #303030; }
.panel { background: #535353; }
.tabs { display: flex; height: 16px; background: #3c3c3c; }
.tab { padding: 0 7px 0 6px; border-right: 1px solid #303030; color: #a5a5a5; line-height: 14px; }
.tab.on { background: #535353; color: #eee; }
.panel-menu { margin-left: auto; padding-right: 3px; }

.color-panel { height: 117px; }
.color-body { display: flex; padding: 8px 5px 0; }
.color-body .fgbg { margin-top: 1px; }
.sliders { display: grid; gap: 5px; margin-left: 7px; }
.slider { display: flex; height: 18px; }
.slider label { width: 9px; line-height: 16px; }
.slider input:last-child { width: 46px; height: 18px; padding-left: 3px; background: #3c3c3c; border: 1px solid #474747; }
.slider input[type="range"] {
  appearance: none;
  width: 84px;
  height: 17px;
  margin: 2px 0 0;
  background: var(--ramp) 5px 0 / 74px 6px no-repeat;
}
.r { --ramp: linear-gradient(90deg, #138314, #e88a24); }
.g { --ramp: linear-gradient(90deg, #c30014, #c3f314); }
.b { --ramp: linear-gradient(90deg, #c38314, #bf8eee); }
.slider input::-webkit-slider-runnable-track { height: 17px; }
.slider input::-webkit-slider-thumb {
  appearance: none;
  width: 10px;
  height: 8px;
  margin-top: 6px;
  background: #bbb;
  clip-path: polygon(50% 0, 100% 60%, 90% 100%, 10% 100%, 0 60%);
}
.spectrum { display: flex; width: 181px; height: 14px; margin: 9px 5px 0; }
.hues {
  flex: 1;
  background:
    linear-gradient(rgba(255, 255, 255, .9), rgba(255, 255, 255, 0) 50%, rgba(0, 0, 0, 0) 55%, rgba(0, 0, 0, .6)),
    linear-gradient(90deg, #e60012, #ff0 17%, #094 32%, #00a0e9 50%, #1d2088 67%, #e4007f 84%, #e60012);
}
.bw { width: 8px; background: linear-gradient(#fff 50%, #000 50%); }

.adjust-panel { height: 119px; border-top: 2px solid #303030; }
.adjust-title { padding: 4px 8px 0; color: #fff; }
.adjust-rows { display: grid; gap: 8px; padding: 7px 27px 0 0; }
.adjust-row { display: flex; justify-content: center; gap: 6px; color: #c0c0c0; }
.adjust-row svg { width: 16px; height: 16px; }

.layers-panel { display: flex; flex: 1; flex-direction: column; min-height: 0; border-top: 2px solid #303030; color: #c4c4c4; }
.layer-row { display: flex; align-items: center; height: 25px; padding: 0 5px 0 4px; border-bottom: 1px solid #404040; }
.filter { height: 26px; }
.kind { width: 64px; }
.kind .search { margin: 0 0 0 5px; }
.kind select { padding-left: 5px; width: 0; }
.filter-icons, .lock-icons { display: flex; color: #8c8c8c; }
.filter-icons { gap: 8px; margin-left: 18px; }
.filter-icons svg, .lock-icons svg { width: 14px; height: 14px; }
.toggle { width: 7px; height: 14px; margin-left: auto; background: linear-gradient(#777 40%, #3a3a3a 40%); }
.blend { width: 100px; }
.row-label { margin-left: auto; margin-right: 4px; }
.pct { width: 50px; border-color: #484848; }
.pct input { color: #777; background: #4c4c4c; }
.lock-label { width: 34px; padding-left: 1px; }
.lock-icons { gap: 6px; }
.layer-list { display: flex; flex: 1; min-height: 0; padding-top: 1px; background: #474747; }
.layers { flex: 1; border-right: 1px solid #383838; }
.layer { display: flex; align-items: center; height: 30px; padding-right: 13px; background: #59677a; }
.eye { display: flex; align-items: center; justify-content: center; width: 28px; height: 30px; background: #4d4d4d; border-right: 1px solid #3a3a3a; }
.thumb { width: 30px; height: 23px; margin-left: 2px; border: 1px solid #1d2b40; background: #fff; }
.layer-name { flex: 1; padding-left: 10px; color: #fff; font-style: italic; }
.layer-scroll { width: 12px; background: #424242; }
.layer-foot { display: flex; align-items: center; gap: 10px; height: 17px; padding-left: 33px; border-top: 1px solid #383838; color: #ccc; }
.layer-foot svg { width: 14px; height: 13px; }
.layer-foot .dim { color: #858585; }

/* Watermark over the lower right corner */
.dots { position: absolute; right: 125px; bottom: 101px; }
.watermark {
  position: absolute;
  z-index: 3;
  right: 54px;
  bottom: 17px;
  display: flex;
  align-items: center;
  gap: 11px;
  width: 180px;
  height: 85px;
  padding-left: 15px;
  background: #213056;
  color: #dfe6f2;
}
.brand { display: grid; white-space: nowrap; }
.brand strong { font: 500 27px/32px "Liberation Sans", "Noto Sans CJK SC", sans-serif; }
.brand span { font: 13px/15px "DejaVu Sans", sans-serif; }
```
FILE: script.js
```javascript
const recent = ["#0000ff", "#1d2088", "#c38314", "#a4b414", "#000000", "#ffffff"];

const palette = [
  "ff0000 ffff00 00ff00 00ffff 0000ff ff00ff ffffff ebebeb e1e1e1 d7d7d7 cccccc c2c2c2 b7b7b7 acacac a0a0a0 959595",
  "e60012 fff100 009944 00a0e9 1d2088 e4007f 898989 7d7d7d 707070 626262 555555 464646 363636 262626 111111 000000",
  "f29b76 f6b37f facd89 fff799 cce198 acd598 89c997 84ccc9 7ecef4 88abda 8c97cb 8f82bc aa89bd c490bf f19ec2 f29c9f",
  "ec6941 f19149 f8b551 fff45c b3d465 80c269 32b16c 13b5b1 00b7ee 448aca 556fb5 5f52a0 8957a1 ae5da1 ea68a2 eb6877",
  "e60012 eb6100 f39800 fff100 8fc31f 22ac38 009944 009e96 00a0e9 0068b7 00479d 1d2088 601986 920783 e4007f e5004f",
  "a40000 a84200 ac6a00 b7aa00 638c0b 097c25 007130 00736d 0075a9 004986 002e73 100964 440062 6a005f a4005b a40035",
  "7d0000 7f2d00 834e00 8a8000 486a00 005e15 005520 005752 005680 003567 001b54 03004c 310047 500047 7e0043 7d0022",
  "d2c1a7 a39480 736357 534741 362f2d d1a973 b58a50 9a6d38 7f5220 6a3d0c"
].join(" ").split(" ").map((hex) => "#" + hex);

function fill(id, colors) {
  const box = document.getElementById(id);
  for (const color of colors) {
    const swatch = document.createElement("button");
    swatch.style.background = color;
    swatch.setAttribute("aria-label", color);
    box.append(swatch);
  }
}

fill("recent", recent);
fill("swatches", palette);
```
